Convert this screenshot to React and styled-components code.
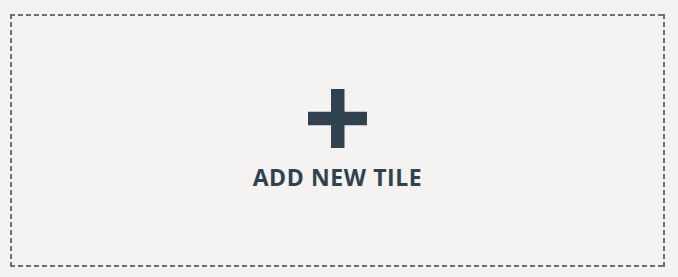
import React from 'react';
import styled, { createGlobalStyle } from 'styled-components';

const GlobalStyle = createGlobalStyle`
  html, body {
    margin: 0;
    padding: 0;
    background: #f4f3f2;
  }
  body {
    font-family: 'Open Sans', 'Liberation Sans', sans-serif;
  }
`;

const dash = '#66737c';

const Page = styled.div`
  width: 678px;
  height: 277px;
  box-sizing: border-box;
  padding: 14px 13px 10px 10px;
`;

// dashed edge drawn with gradients so the dash/gap length can be tuned
const Tile = styled.button`
  width: 100%;
  height: 100%;
  box-sizing: border-box;
  border: none;
  background-color: #f4f3f2;
  background-image:
    linear-gradient(to right, ${dash} 5px, transparent 5px),
    linear-gradient(to right, ${dash} 5px, transparent 5px),
    linear-gradient(to bottom, ${dash} 5px, transparent 5px),
    linear-gradient(to bottom, ${dash} 5px, transparent 5px);
  background-size: 8px 2px, 8px 2px, 2px 8px, 2px 8px;
  background-position: 0 0, 0 100%, 0 0, 100% 0;
  background-repeat: repeat-x, repeat-x, repeat-y, repeat-y;
  display: flex;
  flex-direction: column;
  align-items: center;
  justify-content: center;
  gap: 18px;
  padding: 0 0 3px 0;
  cursor: pointer;
  font-family: inherit;
`;

const PlusIcon = styled.svg`
  width: 59px;
  height: 59px;
  display: block;
`;

const Label = styled.span`
  font-size: 23px;
  font-weight: 700;
  letter-spacing: 0.6px;
  color: #2f4250;
  line-height: 1;
  text-transform: uppercase;
`;

function App() {
  return (
    <>
      <GlobalStyle />
      <Page>
        <Tile type="button">
          <PlusIcon viewBox="0 0 59 59">
            <path
              d="M23 0h13.5v22.8H59v13.4H36.5V59H23V36.2H0V22.8h23z"
              fill="#2f4250"
            />
          </PlusIcon>
          <Label>Add new tile</Label>
        </Tile>
      </Page>
    </>
  );
}

export default App;
